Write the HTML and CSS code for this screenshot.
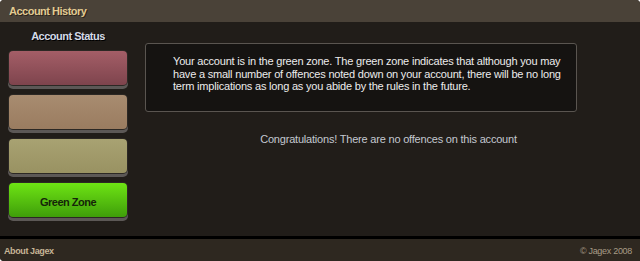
FILE: index.html
```html
<!DOCTYPE html>
<html>
<head>
    <title>Account History</title>
    <link rel="stylesheet" href="styles.css">
</head>
<body>
    <div class="frame">
        <div class="header">Account History</div>
        <div class="main">
            <div class="status">
                <div class="status-title">Account Status</div>
                <div class="zone zone-red"></div>
                <div class="zone zone-orange"></div>
                <div class="zone zone-yellow"></div>
                <div class="zone zone-green">Green Zone</div>
            </div>
            <div class="content">
                <div class="info">
                    Your account is in the green zone. The green zone indicates that although you may
                    have a small number of offences noted down on your account, there will be no long
                    term implications as long as you abide by the rules in the future.
                </div>
                <p class="message">Congratulations! There are no offences on this account</p>
            </div>
        </div>
        <div class="footer">
            <span class="footer-link">About Jagex</span>
            <span class="copy">&copy; Jagex 2008</span>
        </div>
    </div>
</body>
</html>
```

FILE: styles.css
```css
body {
    margin: 0;
    background: #ffffff;
    font-family: "Liberation Sans", Arial, sans-serif;
}

.frame {
    width: 640px;
    height: 261px;
    display: flex;
    flex-direction: column;
    border-radius: 4px 4px 0 4px;
    overflow: hidden;
    background: #211d19;
}

.header {
    height: 22px;
    line-height: 23px;
    padding-left: 9px;
    background: #4a4238;
    color: #e2cb92;
    font-size: 11px;
    font-weight: bold;
    letter-spacing: -0.5px;
    text-shadow: 1px 1px 0 #2a241c;
}

.main {
    flex: 1;
    display: grid;
    grid-template-columns: 137px 1fr;
    border-bottom: 3px solid #000000;
}

.status {
    padding: 8px 0 0 9px;
}

.status-title {
    width: 118px;
    text-align: center;
    line-height: 13px;
    margin-bottom: 8px;
    color: #d4dae6;
    font-size: 11px;
    font-weight: bold;
    letter-spacing: -0.5px;
    text-shadow: 1px 1px 0 #000000;
}

.zone {
    width: 118px;
    height: 34px;
    margin-bottom: 10px;
    border-radius: 4px;
    box-shadow: 0 0 0 1px #2c2824, 0 3px 0 1px #5c5856;
    text-align: center;
    line-height: 38px;
    font-size: 11px;
    font-weight: bold;
    letter-spacing: -0.5px;
    color: #15250a;
}

.zone-red {
    background: linear-gradient(#a45e67, #7e444d);
}

.zone-orange {
    background: linear-gradient(#a88c70, #9a7c60);
}

.zone-yellow {
    background: linear-gradient(#a8a272, #999262);
}

.zone-green {
    background: linear-gradient(#6ee414, #3f9e0a);
}

.content {
    padding: 21px 0 0 8px;
}

.info {
    width: 396px;
    padding: 11px 7px 18px 27px;
    border: 1px solid #5a5550;
    border-radius: 3px;
    background: #151311;
    color: #ececec;
    font-size: 11px;
    line-height: 12.5px;
    letter-spacing: -0.2px;
}

.message {
    margin: 20px 0 0 -8px;
    text-align: center;
    color: #c4c8d0;
    font-size: 11px;
    line-height: 14px;
    letter-spacing: -0.2px;
}

.footer {
    height: 20px;
    display: flex;
    justify-content: space-between;
    align-items: center;
    padding: 2px 8px 0 4px;
    background: #2e2820;
    font-size: 9px;
}

.footer-link {
    color: #c6b596;
    font-weight: bold;
    letter-spacing: -0.4px;
}

.copy {
    color: #a89c86;
    letter-spacing: -0.3px;
}
```
